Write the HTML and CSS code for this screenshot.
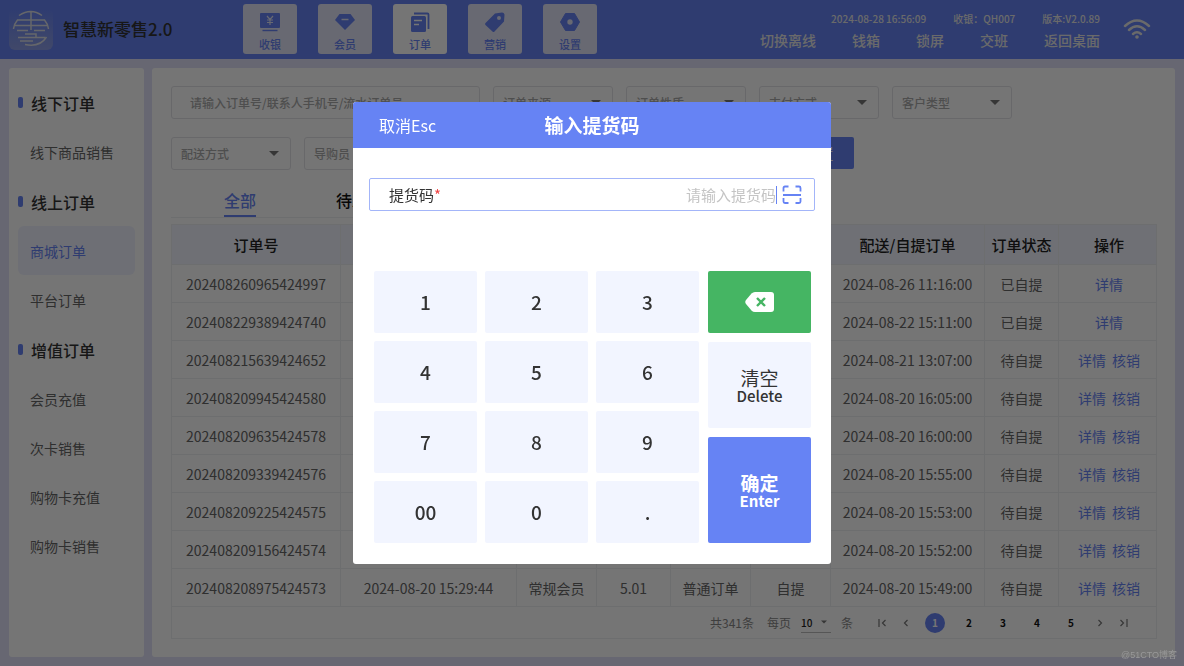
FILE: index.html
```html
<!DOCTYPE html>
<html lang="zh-CN">
<head>
<meta charset="utf-8">
<meta name="viewport" content="width=device-width, initial-scale=1">
<title>智慧新零售2.0</title>
<link rel="stylesheet" href="styles.css">
</head>
<body>
<div class="app">
  <header class="topbar">
    <div class="brand">
      <svg class="brand-logo" viewBox="0 0 44 42" aria-hidden="true">
        <defs><linearGradient id="lg" x1="0" y1="0" x2="0" y2="1"><stop offset="0" stop-color="#6683f4"/><stop offset="1" stop-color="#8d9ee6"/></linearGradient></defs>
        <rect width="44" height="42" rx="6" fill="url(#lg)"/>
        <g fill="none" stroke="#dcdfe6" stroke-width="1.5">
          <path d="M10 7.500Q22 -0.500 33 7.500M8 12H36M22 3.500V22M4.500 21Q5 16 8.500 12M39.500 21Q39 16 35.500 12M5 17.500H39M8 22.500H19M25 22.500H36M16 26H27V29.500M9 29.500H36M11 33H24M16 36.500Q31 39.500 37.500 29"/>
        </g>
      </svg>
      <h1 class="brand-name">智慧新零售2.0</h1>
    </div>
    <nav class="mainnav">
      <button class="navbtn" type="button">
        <svg viewBox="0 0 22 22" aria-hidden="true"><rect x="1" y="2" width="20" height="15" rx="1" fill="currentColor"/><path d="M3.500 19.500H18.500" stroke="currentColor" stroke-width="1.4"/><path d="M8 5L11 8.500L14 5M8 9H14M8 11.500H14M11 8.500V14" fill="none" stroke="#e2e4f8" stroke-width="1.2"/></svg>
        <span>收银</span></button>
      <button class="navbtn" type="button">
        <svg viewBox="0 0 22 22" aria-hidden="true"><path d="M5.500 3H16.500L21 9L11 19L1 9Z" fill="currentColor"/><path d="M7.500 8.500H14.500" stroke="#e2e4f8" stroke-width="1.5"/></svg>
        <span>会员</span></button>
      <button class="navbtn is-active" type="button">
        <svg viewBox="0 0 22 22" aria-hidden="true"><rect x="2" y="5" width="15" height="16" rx="1.500" fill="currentColor"/><path d="M5 2.500H18.500Q19.500 2.500 19.500 3.500V18" fill="none" stroke="currentColor" stroke-width="1.8"/><path d="M5 9.500H13M5 13.500H10" stroke="#fff" stroke-width="1.5"/></svg>
        <span>订单</span></button>
      <button class="navbtn" type="button">
        <svg viewBox="0 0 22 22" aria-hidden="true"><path d="M11 2.500L18 1.500Q20 1.500 20.500 3.500L20 10.500L10.500 20.500Q9.500 21.500 8.500 20.500L1.500 14Q0.500 13 1.500 12Z" fill="currentColor"/><circle cx="15" cy="7" r="2" fill="#e2e4f8"/></svg>
        <span>营销</span></button>
      <button class="navbtn" type="button">
        <svg viewBox="0 0 22 22" aria-hidden="true"><path d="M6.500 2.500H15.500L20.500 11L15.500 19.500H6.500L1.500 11Z" fill="currentColor" stroke="currentColor" stroke-linejoin="round"/><circle cx="11" cy="11" r="2.700" fill="#e2e4f8"/></svg>
        <span>设置</span></button>
    </nav>
    <div class="status">
      <div class="status-info"><span>2024-08-28 16:56:09</span><span>收银：QH007</span><span>版本:V2.0.89</span></div>
      <div class="status-links"><a href="#">切换离线</a><a href="#">钱箱</a><a href="#">锁屏</a><a href="#">交班</a><a href="#">返回桌面</a></div>
    </div>
    <svg class="wifi" viewBox="0 0 28 22" aria-hidden="true"><g fill="none" stroke="#e8e8e8" stroke-width="2.400" stroke-linecap="round"><path d="M2 8Q14 -3 26 8M6 12Q14 4.500 22 12M10 16Q14 12.500 18 16"/></g><circle cx="14" cy="19" r="1.800" fill="#e8e8e8"/></svg>
  </header>

  <div class="body">
    <aside class="sidebar">
      <section><h2>线下订单</h2><a href="#">线下商品销售</a></section>
      <section><h2>线上订单</h2><a href="#" class="is-active">商城订单</a><a href="#">平台订单</a></section>
      <section><h2>增值订单</h2><a href="#">会员充值</a><a href="#">次卡销售</a><a href="#">购物卡充值</a><a href="#">购物卡销售</a></section>
    </aside>

    <main class="content">
      <form class="filters">
        <div class="filter-row">
          <input class="search" type="text" aria-label="搜索订单" placeholder="请输入订单号/联系人手机号/流水订单号">
          <select aria-label="订单来源"><option>订单来源</option></select>
          <select aria-label="订单性质"><option>订单性质</option></select>
          <select aria-label="支付方式"><option>支付方式</option></select>
          <select aria-label="客户类型"><option>客户类型</option></select>
        </div>
        <div class="filter-row">
          <select aria-label="配送方式"><option>配送方式</option></select>
          <select aria-label="导购员"><option>导购员</option></select>
          <input class="dates" type="text" aria-label="日期">
          <button class="primary" type="button">查询</button>
          <button class="primary" type="button">重置</button>
        </div>
      </form>

      <div class="tabs">
        <button type="button" class="is-active">全部</button>
        <button type="button">待发货</button>
        <button type="button">待自提</button>
      </div>

      <table class="orders">
        <colgroup><col class="c-id"><col class="c-time"><col class="c-m"><col class="c-s"><col class="c-m"><col class="c-m"><col class="c-ship"><col class="c-s"><col class="c-op"></colgroup>
        <thead><tr><th>订单号</th><th>下单时间</th><th>客户类型</th><th>金额</th><th>订单性质</th><th>配送方式</th><th>配送/自提订单</th><th>订单状态</th><th>操作</th></tr></thead>
        <tbody>
          <tr><td>202408260965424997</td><td></td><td></td><td></td><td></td><td></td><td>2024-08-26 11:16:00</td><td>已自提</td><td><a href="#">详情</a></td></tr>
          <tr><td>202408229389424740</td><td></td><td></td><td></td><td></td><td></td><td>2024-08-22 15:11:00</td><td>已自提</td><td><a href="#">详情</a></td></tr>
          <tr><td>202408215639424652</td><td></td><td></td><td></td><td></td><td></td><td>2024-08-21 13:07:00</td><td>待自提</td><td><a href="#">详情</a><a href="#">核销</a></td></tr>
          <tr><td>202408209945424580</td><td></td><td></td><td></td><td></td><td></td><td>2024-08-20 16:05:00</td><td>待自提</td><td><a href="#">详情</a><a href="#">核销</a></td></tr>
          <tr><td>202408209635424578</td><td></td><td></td><td></td><td></td><td></td><td>2024-08-20 16:00:00</td><td>待自提</td><td><a href="#">详情</a><a href="#">核销</a></td></tr>
          <tr><td>202408209339424576</td><td></td><td></td><td></td><td></td><td></td><td>2024-08-20 15:55:00</td><td>待自提</td><td><a href="#">详情</a><a href="#">核销</a></td></tr>
          <tr><td>202408209225424575</td><td></td><td></td><td></td><td></td><td></td><td>2024-08-20 15:53:00</td><td>待自提</td><td><a href="#">详情</a><a href="#">核销</a></td></tr>
          <tr><td>202408209156424574</td><td></td><td></td><td></td><td></td><td></td><td>2024-08-20 15:52:00</td><td>待自提</td><td><a href="#">详情</a><a href="#">核销</a></td></tr>
          <tr><td>202408208975424573</td><td>2024-08-20 15:29:44</td><td>常规会员</td><td>5.01</td><td>普通订单</td><td>自提</td><td>2024-08-20 15:49:00</td><td>待自提</td><td><a href="#">详情</a><a href="#">核销</a></td></tr>
        </tbody>
      </table>

      <div class="pager">
        <span>共341条</span>
        <label class="per-page"><span>每页</span><select><option>10</option></select><span>条</span></label>
        <div class="pages">
          <button type="button" aria-label="首页"><svg viewBox="0 0 10 10"><path d="M2 1V9M8.500 2L5.500 5L8.500 8"/></svg></button>
          <button type="button" aria-label="上一页"><svg viewBox="0 0 10 10"><path d="M6.500 2L3.500 5L6.500 8"/></svg></button>
          <button type="button" class="page is-active">1</button>
          <button type="button" class="page">2</button>
          <button type="button" class="page">3</button>
          <button type="button" class="page">4</button>
          <button type="button" class="page">5</button>
          <button type="button" aria-label="下一页"><svg viewBox="0 0 10 10"><path d="M3.500 2L6.500 5L3.500 8"/></svg></button>
          <button type="button" aria-label="末页"><svg viewBox="0 0 10 10"><path d="M1.500 2L4.500 5L1.500 8M8 1V9"/></svg></button>
        </div>
      </div>
    </main>
  </div>
</div>

<div class="overlay">
  <div class="dialog" role="dialog" aria-labelledby="dlg-title">
    <div class="dialog-head">
      <button type="button" class="cancel">取消Esc</button>
      <h2 id="dlg-title">输入提货码</h2>
    </div>
    <div class="field">
      <label for="code">提货码<b>*</b></label>
      <input id="code" type="text" placeholder="请输入提货码">
      <span class="caret"></span>
      <button type="button" class="scan" aria-label="扫码"><svg viewBox="0 0 20 20"><path d="M1.500 6.500V3Q1.500 1.500 3 1.500H6.500M13.500 1.500H17Q18.500 1.500 18.500 3V6.500M1.500 13V16.500Q1.500 18 3 18H6.500M13.500 18H17Q18.500 18 18.500 16.500V13M1 10H19"/></svg></button>
    </div>
    <div class="keypad">
      <div class="digits">
        <button type="button">1</button><button type="button">2</button><button type="button">3</button>
        <button type="button">4</button><button type="button">5</button><button type="button">6</button>
        <button type="button">7</button><button type="button">8</button><button type="button">9</button>
        <button type="button">00</button><button type="button">0</button><button type="button">.</button>
      </div>
      <div class="actions">
        <button type="button" class="back" aria-label="退格"><svg viewBox="0 0 30 20"><path d="M10 0H26Q29 0 29 3V17Q29 20 26 20H10Q8 20 6.500 18.500L1 12Q-0.500 10 1 8L6.500 1.500Q8 0 10 0Z" fill="#fff"/><path d="M12 6L20 14M20 6L12 14" stroke="#45b563" stroke-width="2.400"/></svg></button>
        <button type="button" class="clear">清空<small>Delete</small></button>
        <button type="button" class="enter">确定<small>Enter</small></button>
      </div>
    </div>
  </div>
</div>
<div class="watermark">@51CTO博客</div>
</body>
</html>
```
FILE: styles.css
```css
:root {
  --blue: #6683f4;
  --line: #eeeff2;
  --field-line: #e2e3e8;
}
* { box-sizing: border-box; }
body {
  margin: 0;
  font-family: "Noto Sans CJK SC", "Noto Sans", sans-serif;
  font-size: 14px;
  line-height: 20px;
  color: #666;
}
button, input, select { font: inherit; color: inherit; border: 0; margin: 0; padding: 0; background: none; }
h1, h2 { margin: 0; font-weight: 500; }
a { color: inherit; text-decoration: none; }
.app { min-height: 100vh; display: flex; flex-direction: column; background: #e1e1f8; }

/* top bar */
.topbar { height: 59px; background: var(--blue); display: flex; align-items: center; padding: 0 33px 1px 9px; }
.brand { display: flex; align-items: center; gap: 10px; width: 234px; }
.brand-logo { width: 44px; height: 42px; }
.brand-name { font-size: 17px; line-height: 24px; color: #333; }
.mainnav { display: flex; gap: 21px; }
.navbtn {
  width: 54px; height: 50px; border-radius: 3px; background: #e2e4f8; color: var(--blue);
  font-size: 11px; line-height: 14px; font-weight: 500;
  display: flex; flex-direction: column; align-items: center; justify-content: flex-end; gap: 4px; padding-bottom: 3px;
}
.navbtn svg { width: 22px; height: 22px; }
.navbtn.is-active { background: #fff; }
.status { margin-left: auto; color: #e8e8e8; font-weight: 500; }
.status-info { display: flex; justify-content: flex-end; gap: 27px; font-size: 10px; line-height: 16px; margin-top: 4px; }
.status-links { display: flex; justify-content: flex-end; gap: 36px; line-height: 24px; margin-top: 1px; }
.wifi { width: 28px; height: 22px; margin-left: 23px; }

/* sidebar */
.body { flex: 1; display: flex; gap: 8px; padding: 9px; }
.sidebar { width: 135px; background: #fff; border-radius: 3px; padding: 10px 9px; display: flex; flex-direction: column; gap: 1px; }
.sidebar h2, .sidebar a { height: 49px; display: flex; align-items: center; }
.sidebar h2 { font-size: 16px; color: #333; gap: 8px; }
.sidebar h2::before { content: ""; width: 5px; height: 11px; border-radius: 2px; background: var(--blue); }
.sidebar a { padding-left: 12px; border-radius: 6px; }
.sidebar a.is-active { background: #eff2ff; color: var(--blue); }

/* content */
.content { flex: 1; min-width: 0; background: #fff; border-radius: 3px; padding: 18px 18px 18px 19px; }
.filters { display: flex; flex-direction: column; gap: 18px; }
.filter-row { display: flex; gap: 13px; }
.filter-row input, .filter-row select { height: 33px; border: 1px solid var(--field-line); border-radius: 3px; font-size: 12px; font-weight: 500; color: #aaa; }
.filter-row select, .per-page select {
  appearance: none;
  background: url("data:image/svg+xml,%3Csvg xmlns='http://www.w3.org/2000/svg' viewBox='0 0 10 5'%3E%3Cpath d='M0 0H10L5 5Z' fill='%23777'/%3E%3C/svg%3E") no-repeat right 11px center / 10px 5px;
}
.filter-row select { width: 120px; padding-left: 9px; }
.search { width: 309px; padding: 0 18px; }
.dates { width: 245px; }
input::placeholder { color: #aaa; opacity: 1; }
.primary { width: 73px; height: 32px; border-radius: 2px; background: var(--blue); color: #fff; font-size: 16px; }
.tabs { display: inline-flex; gap: 80px; padding: 0 53px; margin-top: 14px; border-bottom: 1px solid var(--line); font-size: 16px; font-weight: 500; vertical-align: top; }
.tabs button { height: 33px; color: #111; border-bottom: 2px solid transparent; }
.tabs .is-active { color: var(--blue); border-color: var(--blue); }

.orders { width: 100%; margin-top: 6px; table-layout: fixed; border-collapse: collapse; text-align: center; }
.orders th, .orders td { border: 1px solid var(--line); padding: 0; white-space: nowrap; }
.orders th { height: 40px; background: #f1f4ff; color: #222; font-size: 15px; font-weight: 500; }
.orders td { height: 38px; }
.orders th:last-child, .orders td:last-child { padding-left: 3px; }
.orders td a { color: var(--blue); }
.orders a + a { margin-left: 6px; }
.c-id { width: 169px; }
.c-time { width: 176px; }
.c-m { width: 80px; }
.c-s { width: 74px; }
.c-ship { width: 154px; }
.c-op { width: 98px; }

/* pager */
.pager { height: 32px; border: 1px solid var(--line); border-top: 0; display: flex; align-items: center; justify-content: flex-end; gap: 13px; padding-right: 27px; color: #888; font-size: 12px; }
.per-page { display: flex; align-items: center; gap: 10px; }
.per-page select { width: 30px; height: 20px; border-bottom: 1px solid #bbb; font-size: 10px; font-weight: 500; color: #222; background-position: right 4px center; background-size: 6px 4px; }
.pages { display: flex; align-items: center; gap: 14px; padding-left: 11px; }
.pages button { width: 10px; height: 20px; display: grid; place-items: center; }
.pages svg { width: 10px; height: 10px; fill: none; stroke: #777; stroke-width: 1.2; }
.pages .page { width: 20px; height: 20px; border-radius: 50%; font-size: 10px; font-weight: 700; color: #111; }
.pages .is-active { background: var(--blue); color: #fff; }

/* dialog */
.overlay { position: fixed; inset: 0; background: rgba(0, 0, 0, .54); display: grid; place-items: center; }
.dialog { width: 478px; background: #fff; border-radius: 3px; overflow: hidden; padding-bottom: 21px; }
.dialog-head { height: 46px; background: var(--blue); color: #fff; display: grid; grid-template-columns: 1fr auto 1fr; align-items: center; }
.cancel { justify-self: start; padding-left: 26px; font-size: 16px; }
.dialog-head h2 { font-size: 19px; font-weight: 700; }
.field { height: 33px; margin: 30px 16px 0; border: 1px solid #a3b5f9; border-radius: 2px; display: flex; align-items: center; padding: 0 12px 0 19px; font-size: 15px; color: #333; }
.field b { color: #f04646; font-weight: 400; }
.field input { flex: 1; min-width: 0; text-align: right; outline: 0; }
.field input::placeholder { color: #c4c4c4; }
.caret { width: 1px; height: 18px; background: var(--blue); }
.scan { width: 20px; height: 20px; margin-left: 5px; }
.scan svg { display: block; fill: none; stroke: var(--blue); stroke-width: 1.8; }
.keypad { margin: 60px 20px 0 21px; display: grid; grid-template-columns: 325px 1fr; gap: 9px; }
.keypad button { background: #f2f5ff; border-radius: 2px; color: #333; font-size: 19px; font-weight: 500; }
.digits { display: grid; grid-template-columns: repeat(3, 1fr); grid-auto-rows: 62px; gap: 8px; }
.actions { display: grid; grid-template-rows: 62px 86px 1fr; gap: 9px; }
.actions button { display: flex; flex-direction: column; align-items: center; justify-content: center; line-height: 21px; }
.actions small { font-size: 15px; line-height: 16px; }
.keypad .clear { font-weight: 400; }
.clear small { font-weight: 500; }
.keypad .back { background: #45b563; }
.back svg { width: 30px; height: 20px; }
.keypad .enter { background: var(--blue); color: #fff; font-weight: 700; }
.watermark { position: fixed; right: 7px; bottom: 2px; font: 9px/18px "Liberation Sans", "Noto Sans CJK SC", sans-serif; color: #999; }
```
